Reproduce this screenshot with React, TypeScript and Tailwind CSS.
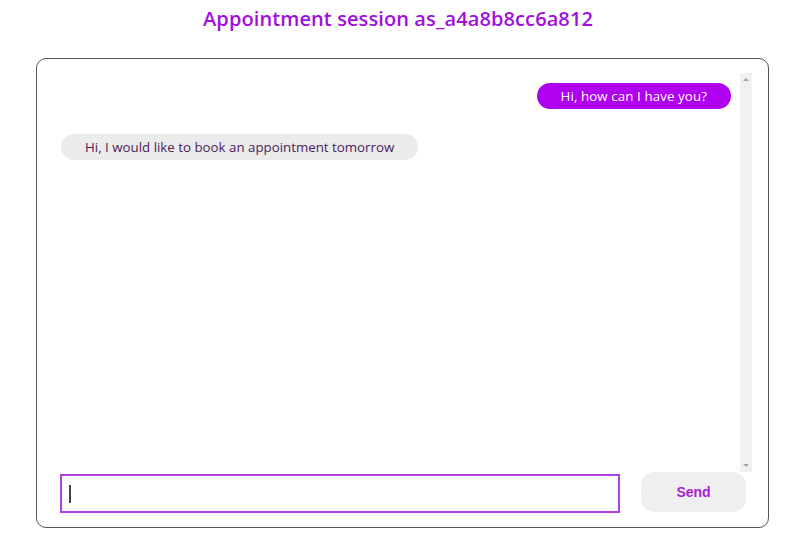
import React from "react";

export default function App() {
  const font = { fontFamily: '"Open Sans", "Noto Sans", sans-serif' };
  return (
    <div className="min-h-screen w-[796px] bg-white" style={font}>
      <h1 className="pt-[5px] text-center text-[20px] font-semibold leading-[28px] tracking-[0.1px] text-[#a00fe0]">
        Appointment session as_a4a8b8cc6a812
      </h1>
      <div className="ml-[36px] mt-[25px] flex h-[470px] w-[733px] flex-col rounded-[10px] border border-[#555555] py-[14px]">
        <div className="flex h-[399px]">
          <div className="flex flex-1 flex-col gap-[25px] pl-[24px] pr-[9px] pt-[10px]">
            <div className="flex justify-end">
              <div className="rounded-full bg-[#b000f0] px-[24px] text-[13.3px] leading-[26px] tracking-[0.1px] text-white">
                Hi, how can I have you?
              </div>
            </div>
            <div className="flex justify-start">
              <div className="rounded-full bg-[#ebebeb] px-[24px] text-[13.3px] leading-[26px] text-[#4b1c5e]">
                Hi, I would like to book an appointment tomorrow
              </div>
            </div>
          </div>
          <div className="mr-[16px] flex w-[12px] flex-col items-center justify-between bg-[#f1f1f1] py-[5px]">
            <div className="h-0 w-0 border-x-[3px] border-b-[3px] border-x-transparent border-b-[#a3a3a3]" />
            <div className="h-0 w-0 border-x-[3px] border-t-[3px] border-x-transparent border-t-[#a3a3a3]" />
          </div>
        </div>
        <div className="flex h-[41px] items-start">
          <div className="ml-[23px] mt-[2px] flex h-[39px] w-[560px] items-center border-2 border-[#b040e0] bg-white">
            <span className="ml-[7px] h-[18px] w-[2px] bg-[#444444]" />
          </div>
          <button
            className="ml-[21px] h-[40px] w-[105px] rounded-[14px] bg-[#efefef] text-[14px] font-bold text-[#a81ed6]"
            style={{ fontFamily: '"Liberation Sans", Arial, sans-serif' }}
          >
            Send
          </button>
        </div>
      </div>
    </div>
  );
}
